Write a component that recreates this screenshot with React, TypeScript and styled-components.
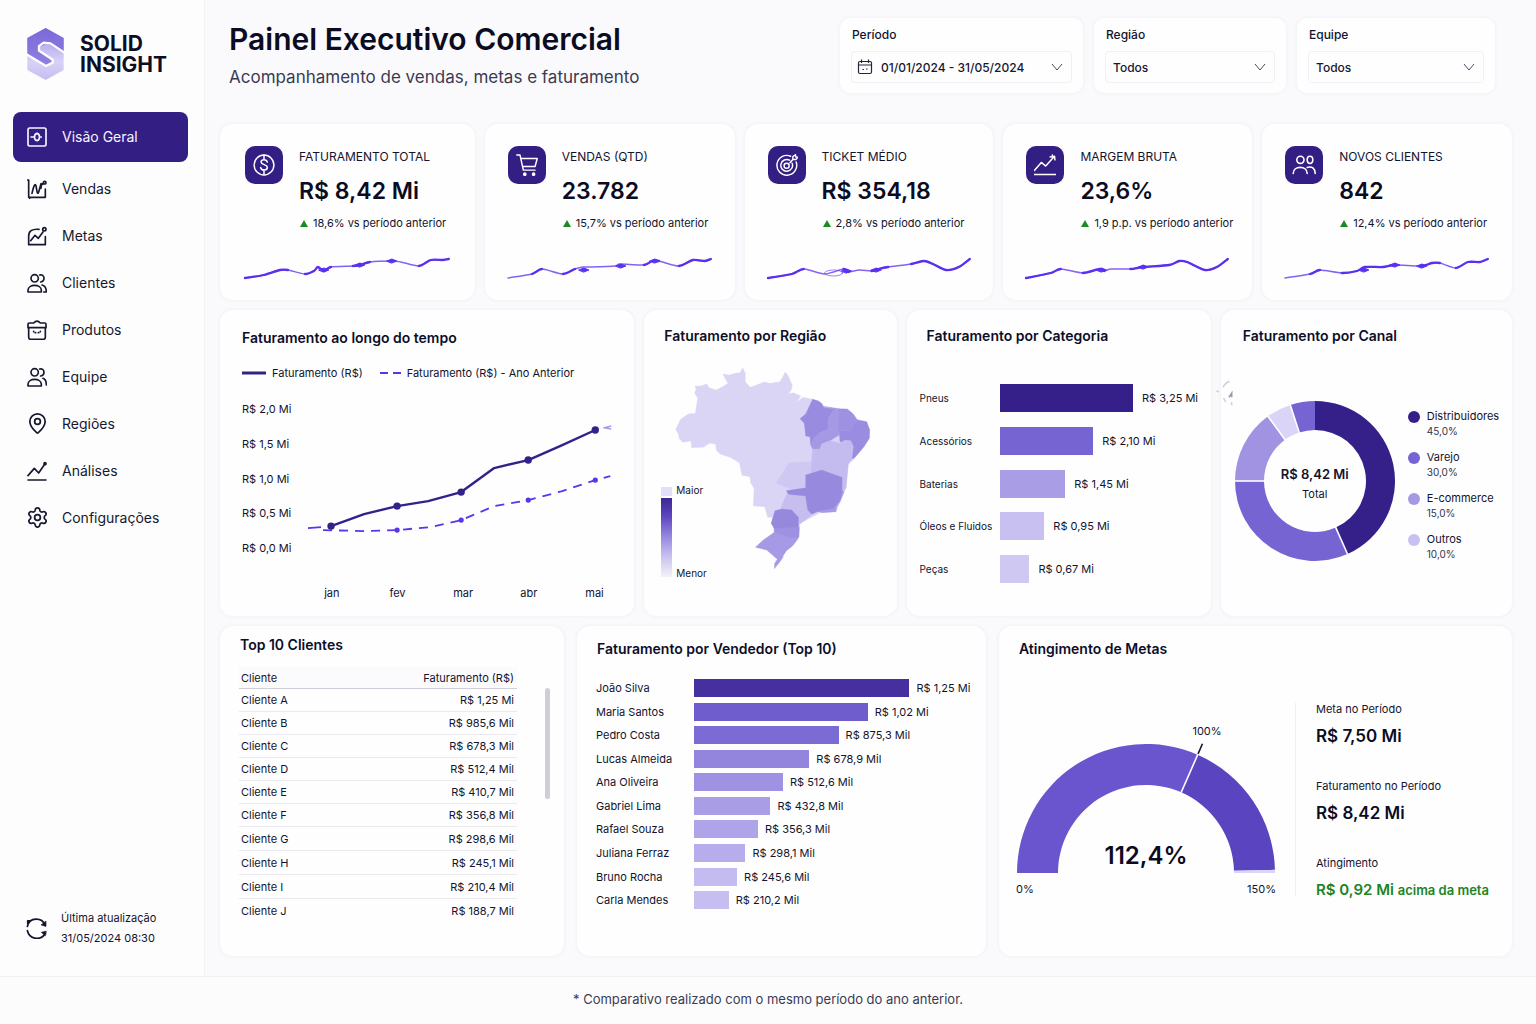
import React from "react";
import styled, { createGlobalStyle } from "styled-components";
import { MapPin, Settings } from "lucide-react";

const GlobalStyle = createGlobalStyle`
  *, *::before, *::after { box-sizing: border-box; }
  body {
    margin: 0;
    background: #fafafd;
    color: #12132d;
    font-family: Inter, "Liberation Sans", sans-serif;
    font-size: 11px;
    line-height: 16px;
  }
  h1, h2, p, ul, dl, dd { margin: 0; padding: 0; }
  ul { list-style: none; }
`;

/* ---------- Shell ---------- */

const Page = styled.div`
  min-height: 100vh;
  display: flex;
  flex-direction: column;
`;

const Body = styled.div`
  flex: 1;
  display: flex;
`;

const Sidebar = styled.aside`
  flex: none;
  width: 205px;
  display: flex;
  flex-direction: column;
  padding: 28px 16px 28px 13px;
  background: #fdfdfe;
  border-right: 1px solid #f3f3f7;
`;

const Brand = styled.div`
  display: flex;
  align-items: center;
  gap: 15px;
  padding-left: 14px;
  margin-bottom: 32px;
`;

const BrandName = styled.span`
  font-size: 21px;
  line-height: 21px;
  font-weight: 700;
  color: #0d0e24;
`;

const NavLink = styled.a<{ $active?: boolean }>`
  display: flex;
  align-items: center;
  gap: 15px;
  height: ${(p) => (p.$active ? 50 : 47)}px;
  margin-bottom: ${(p) => (p.$active ? 3 : 0)}px;
  padding-left: 14px;
  border-radius: 8px;
  font-size: 14px;
  line-height: 20px;
  text-decoration: none;
  color: ${(p) => (p.$active ? "#f6f4ff" : "#16182f")};
  background: ${(p) => (p.$active ? "#331e84" : "transparent")};
`;

const IconSlot = styled.span`
  flex: none;
  width: 20px;
  height: 20px;
  display: flex;
  align-items: center;
  justify-content: center;
  > svg { flex: none; }
`;

const Updated = styled.div`
  margin-top: auto;
  display: flex;
  align-items: center;
  gap: 14px;
  padding-left: 13px;
  line-height: 20px;
`;

const UpdatedTime = styled.time`
  display: block;
`;

const Main = styled.main`
  flex: 1;
  min-width: 0;
  display: flex;
  flex-direction: column;
  gap: 10px;
  padding: 18px 24px 20px 15px;
`;

const Footer = styled.footer`
  padding: 12px 16px 15px;
  border-top: 1px solid #f0f0f4;
  background: #fcfcfd;
  text-align: center;
  font-size: 13px;
  line-height: 20px;
  color: #3a3b52;
`;

/* ---------- Header ---------- */

const Header = styled.header`
  display: flex;
  justify-content: space-between;
  align-items: flex-start;
  padding: 0 17px 0 9px;
  margin-bottom: 21px;
`;

const Title = styled.h1`
  font-size: 30px;
  line-height: 42px;
  font-weight: 600;
  color: #0b0c22;
`;

const Subtitle = styled.p`
  margin-top: 5px;
  font-size: 17px;
  line-height: 24px;
  color: #3a3b52;
`;

const Filters = styled.form`
  display: flex;
  gap: 11px;
`;

const FilterCard = styled.div<{ $width: number }>`
  width: ${(p) => p.$width}px;
  padding: 9px 11px 10px;
  border-radius: 10px;
  background: #fefeff;
  box-shadow: 0 0 4px rgba(40, 36, 90, 0.06);
`;

const FilterLabel = styled.label`
  display: block;
  margin-bottom: 8px;
  padding-left: 1px;
  font-size: 12px;
  line-height: 16px;
  font-weight: 500;
`;

const Field = styled.div`
  display: grid;
  align-items: center;
  > * { grid-area: 1 / 1; }
  > svg { pointer-events: none; }
`;

const Select = styled.select<{ $icon?: boolean }>`
  appearance: none;
  width: 100%;
  height: 32px;
  padding: 2px 28px 0 ${(p) => (p.$icon ? 29 : 7)}px;
  border: 1px solid #f0f0f5;
  border-radius: 4px;
  background: transparent;
  font: inherit;
  font-size: 12px;
  font-weight: 500;
  color: #16182f;
`;

const Chevron = styled.svg`
  width: 12px;
  height: 8px;
  margin-right: 9px;
  justify-self: end;
`;

const Calendar = styled.svg`
  width: 16px;
  height: 16px;
  margin-left: 6px;
`;

/* ---------- Cards ---------- */

const Row = styled.div<{ $cols: string; $gap?: number }>`
  display: grid;
  grid-template-columns: ${(p) => p.$cols};
  gap: ${(p) => p.$gap ?? 10}px;
`;

const Card = styled.section<{ $top?: number }>`
  position: relative;
  min-width: 0;
  padding: ${(p) => p.$top ?? 16}px 0 15px;
  border-radius: 13px;
  background: #fefeff;
  box-shadow: 0 0 4px rgba(40, 36, 90, 0.06);
`;

const CardTitle = styled.h2<{ $inset?: number }>`
  padding-left: ${(p) => p.$inset ?? 20}px;
  font-size: 14px;
  line-height: 20px;
  font-weight: 600;
  color: #0d0e28;
`;

const Kpi = styled(Card)`
  padding: 22px 23px 18px;
  &:first-child { padding: 22px 26px 18px 25px; }
`;

const KpiHead = styled.div`
  display: flex;
  gap: 16px;
  margin-bottom: 24px;
`;

const KpiIcon = styled.span`
  flex: none;
  width: 38px;
  height: 38px;
  display: grid;
  place-items: center;
  border-radius: 10px;
  background: #331e84;
  color: #fff;
`;

const KpiText = styled.div`
  display: grid;
  gap: 8px;
  padding-top: 1px;
  white-space: nowrap;
`;

const KpiLabel = styled.h2`
  font-size: 12px;
  line-height: 20px;
  font-weight: 400;
`;

const KpiValue = styled.p`
  font-size: 23px;
  line-height: 32px;
  font-weight: 600;
  color: #0b0c22;
`;

const Delta = styled.p`
  display: flex;
  align-items: center;
  gap: 5px;
  padding-left: 1px;
  line-height: 16px;
  &::before {
    content: "";
    border: solid transparent;
    border-width: 0 4px 7px;
    border-bottom-color: #1c8a24;
  }
`;

const SparkSvg = styled.svg`
  display: block;
  width: 100%;
  height: 27px;
  overflow: visible;
`;

/* ---------- Line chart ---------- */

const Legend = styled.ul`
  display: flex;
  gap: 17px;
  margin: 17px 0 21px;
  padding-left: 22px;
  li { display: flex; align-items: center; gap: 6px; }
`;

const PlotGrid = styled.div`
  display: grid;
  grid-template-columns: 57px 1fr;
  padding: 0 7px 0 22px;
`;

const YAxis = styled.div`
  display: flex;
  flex-direction: column;
  justify-content: space-between;
  line-height: 14px;
`;

const XAxis = styled.div`
  grid-column: 2;
  display: grid;
  grid-template-columns: repeat(5, 1fr);
  margin-top: 30px;
  text-align: center;
`;

const Fluid = styled.svg`
  display: block;
  width: 100%;
  height: auto;
`;

/* ---------- Map ---------- */

const MapStack = styled.div`
  display: grid;
  height: 214px;
  margin-top: 20px;
  > * { grid-area: 1 / 1; }
`;

const MapSvg = styled.svg`
  width: 200px;
  height: 204px;
  margin-left: 28px;
`;

const MapLegend = styled.div`
  align-self: end;
  display: flex;
  gap: 4px;
  height: 97px;
  margin-left: 17px;
  font-size: 10px;
  line-height: 14px;
`;

const Scale = styled.div`
  display: flex;
  flex-direction: column;
  gap: 2px;
  width: 11px;
  padding: 4px 0 3px;
  &::before { content: ""; height: 9px; background: #e4dff8; }
  &::after {
    content: "";
    flex: 1;
    background: linear-gradient(#3d2794, #5a43bd 22%, #8d7edb 45%, #c9c1f0 74%, #f3f2f7);
  }
`;

const ScaleLabels = styled.div`
  display: flex;
  flex-direction: column;
  justify-content: space-between;
`;

/* ---------- Bar lists ---------- */

const BarList = styled.ul<{ $height: number; $top: number }>`
  display: flex;
  flex-direction: column;
  justify-content: space-between;
  height: ${(p) => p.$height}px;
  margin-top: ${(p) => p.$top}px;
`;

const BarRow = styled.li<{ $label: number; $left: number; $right: number }>`
  display: grid;
  grid-template-columns: ${(p) => p.$label}px 1fr;
  align-items: center;
  padding: 0 ${(p) => p.$right}px 0 ${(p) => p.$left}px;
  white-space: nowrap;
`;

const BarLabel = styled.span<{ $size: number }>`
  font-size: ${(p) => p.$size}px;
`;

const BarTrack = styled.div<{ $gap: number }>`
  display: flex;
  align-items: center;
  gap: ${(p) => p.$gap}px;
`;

const Bar = styled.span<{ $height: number; $color: string }>`
  flex: none;
  height: ${(p) => p.$height}px;
  background: ${(p) => p.$color};
`;

/* ---------- Donut ---------- */

const DonutRow = styled.div`
  display: flex;
  align-items: flex-start;
  gap: 12px;
  margin-top: 54px;
  padding-left: 13px;
`;

const DonutBox = styled.div`
  flex: none;
  width: 162px;
  display: grid;
  align-items: center;
  > * { grid-area: 1 / 1; }
`;

const DonutText = styled.p`
  padding-top: 5px;
  text-align: center;
  line-height: 20px;
  strong { display: block; font-size: 13px; font-weight: 600; }
`;

const ChannelList = styled.ul`
  display: grid;
  gap: 11px;
  margin-top: 9px;
  line-height: 15px;
`;

const Channel = styled.li<{ $color: string }>`
  display: flex;
  gap: 7px;
  &::before {
    content: "";
    width: 12px;
    height: 12px;
    margin-top: 2px;
    border-radius: 50%;
    background: ${(p) => p.$color};
  }
  small { display: block; font-size: 10px; color: #33354c; }
`;

const Specks = styled.svg`
  position: absolute;
  left: -6px;
  top: 70px;
  width: 20px;
  height: 30px;
`;

/* ---------- Table ---------- */

const TableWrap = styled.div`
  display: flex;
  gap: 28px;
  margin-top: 12px;
  padding: 0 14px 18px 19px;
`;

const Table = styled.table`
  flex: 1;
  border-collapse: separate;
  border-spacing: 0;
  line-height: 16px;
  th, td { height: 23px; padding: 0 3px 0 2px; font-weight: 400; text-align: left; border-bottom: 1px solid #e9e9ef; }
  th { height: 22px; background: #fbfbfd; border-color: #cfced9; }
  th:last-child, td:last-child { text-align: right; }
  tr:last-child td { border-bottom: 0; }
  thead tr:last-child th { border-bottom: 1px solid #cfced9; }
  tbody tr:nth-child(n + 7) td { height: 24px; }
`;

const ScrollThumb = styled.div`
  width: 5px;
  height: 111px;
  margin-top: 21px;
  border-radius: 3px;
  background: #cfced8;
`;

/* ---------- Goals ---------- */

const Goals = styled.div`
  display: flex;
  padding-left: 17px;
`;

const GaugeBox = styled.div`
  flex: none;
  width: 260px;
  margin-top: 63px;
`;

const GaugeEnds = styled.div`
  display: flex;
  justify-content: space-between;
  margin-top: 7px;
`;

const Divider = styled.div`
  width: 1px;
  margin: 44px 20px 6px 19px;
  background: #ededf2;
`;

const Stats = styled.dl`
  display: grid;
  gap: 30px;
  margin-top: 42px;
  white-space: nowrap;
  dt { margin-bottom: 7px; }
`;

const StatValue = styled.dd<{ $good?: boolean }>`
  font-size: ${(p) => (p.$good ? 15 : 17)}px;
  line-height: 24px;
  font-weight: 600;
  color: ${(p) => (p.$good ? "#1b8426" : "#0b0c22")};
  small { font-size: 13px; }
`;

/* ---------- Icons ---------- */

const Glyph = ({ children, size = 20, w = 5 }: { children: React.ReactNode; size?: number; w?: number }) => (
  <svg width={size} height={size} viewBox="0 0 60 60" fill="none" stroke="currentColor" strokeWidth={w} strokeLinecap="round" strokeLinejoin="round" aria-hidden="true">
    {children}
  </svg>
);

const Logo = () => (
  <svg width="38" height="52" viewBox="80 84 114 156" aria-hidden="true">
    <defs>
      <linearGradient id="logoTop" x1="0" y1="0" x2="0" y2="1">
        <stop offset="0" stopColor="#7c69d9" />
        <stop offset="1" stopColor="#8f7fe2" />
      </linearGradient>
      <linearGradient id="logoBase" x1="0" y1="0" x2="0" y2="1">
        <stop offset="0.3" stopColor="#b9aeee" />
        <stop offset="0.65" stopColor="#d8d2f6" />
        <stop offset="1" stopColor="#c6bdf1" />
      </linearGradient>
    </defs>
    <path d="M136 84 L190 114 V210 L136 240 L81 210 V114 Z" fill="url(#logoBase)" />
    <path d="M136 84 L190 114 V160 L141 129 L116 142 V152 L157 179 V187 L137 198 L81 165 V114 Z" fill="url(#logoTop)" />
    <path d="M195 160 L150 130 L130 128 L116 138 V152 L157 179 V188 L137 198 L78 163" fill="none" stroke="#fdfdfe" strokeWidth="7" />
  </svg>
);

const people = (
  <>
    <circle cx="23" cy="16" r="11" />
    <path d="M38 6 C53 2 56 24 41 27" />
  </>
);

const navItems: { label: string; icon: React.ReactNode }[] = [
  {
    label: "Visão Geral",
    icon: (
      <Glyph>
        <rect x="3" y="3" width="54" height="54" rx="5" />
        <path d="M30 19 C40 21 40 39 30 41 C20 39 20 21 30 19 Z M12 30 H20 M41 30 H43" />
      </Glyph>
    ),
  },
  {
    label: "Vendas",
    icon: (
      <Glyph>
        <path d="M2 3 H5 V55 H55 V30 M15 43 C22 12 26 12 28 26 S32 50 36 36 L42 14 M42 28 C42 18 46 14 50 14 M8 58 V55" />
        <circle cx="53" cy="11" r="4" />
      </Glyph>
    ),
  },
  {
    label: "Metas",
    icon: (
      <Glyph>
        <path d="M36 10 C14 8 5 16 5 30 V56 H55 V32 M11 44 L24 28 L34 37 L48 18" />
        <circle cx="52" cy="10" r="5" />
      </Glyph>
    ),
  },
  {
    label: "Clientes",
    icon: (
      <Glyph>
        {people}
        <path d="M3 57 V52 C3 32 43 32 43 52 V57 Z M45 36 C55 38 58 44 58 57 H50" />
      </Glyph>
    ),
  },
  {
    label: "Produtos",
    icon: (
      <Glyph>
        <path d="M5 24 V52 Q5 58 11 58 H49 Q55 58 55 52 V24 M3 12 Q3 9 7 9 H20 Q30 -2 40 9 H53 Q57 9 57 12 V23 H3 Z M20 34 V35 M40 34 V35 M25 38 H26 M34 38 H35" />
      </Glyph>
    ),
  },
  {
    label: "Equipe",
    icon: (
      <Glyph>
        {people}
        <path d="M3 57 V52 C3 32 43 32 43 52 V57 Z M48 34 C56 37 58 42 58 54" />
      </Glyph>
    ),
  },
  { label: "Regiões", icon: <MapPin size={23} strokeWidth={1.8} /> },
  {
    label: "Análises",
    icon: (
      <Glyph>
        <path d="M3 57 H57 M3 44 L22 22 L35 36 L53 10" />
        <circle cx="54" cy="8" r="3" />
      </Glyph>
    ),
  },
  { label: "Configurações", icon: <Settings size={23} strokeWidth={1.8} /> },
];

const RefreshIcon = () => (
  <Glyph size={21}>
    <path d="M4 24 C10 -4 46 -2 54 20 M4 36 C10 64 46 64 54 44 M5 8 L12 8 M5 8 V16" />
    <path d="M57 10 V24 L44 20 Z M57 38 L44 41 L55 50 Z" fill="currentColor" strokeWidth="2" />
  </Glyph>
);

const kpiIcons: Record<string, React.ReactNode> = {
  money: (
    <Glyph size={22} w={4}>
      <circle cx="30" cy="30" r="27" />
      <path d="M39 22 C37 13 21 14 22 22 C23 31 39 27 39 37 C39 46 22 46 21 37 M30 3 V14 M30 45 V56" />
    </Glyph>
  ),
  cart: (
    <Glyph size={22} w={4}>
      <path d="M2 3 H11 L20 44 H52 M14 12 H58 L52 34 H19" />
      <circle cx="24" cy="55" r="3" fill="currentColor" />
      <circle cx="48" cy="55" r="3" fill="currentColor" />
    </Glyph>
  ),
  target: (
    <Glyph size={22} w={4}>
      <path d="M40 6 A27 27 0 1 0 55 22 M37 17 A16 16 0 1 0 44 25 M38 24 L46 15 V7 L53 2 L54 8 L60 9 L54 15 H46" />
      <circle cx="29" cy="32" r="7" />
    </Glyph>
  ),
  trend: (
    <Glyph size={22} w={4}>
      <path d="M1 56 H59 M1 45 L20 23 L32 33 L54 8 M44 8 L56 6 L57 16 M50 3 V6" />
    </Glyph>
  ),
  users: (
    <Glyph size={24} w={4}>
      <circle cx="21" cy="17" r="9" />
      <ellipse cx="45" cy="17" rx="7" ry="9" />
      <path d="M3 51 C3 31 38 31 38 51 M38 36 C51 32 58 40 58 51" />
    </Glyph>
  ),
};

const DownMark = () => (
  <Chevron viewBox="0 0 12 8" fill="none" stroke="#4b4c66" aria-hidden="true">
    <path d="M1 1 L6 7 L11 1" />
  </Chevron>
);

/* ---------- Data ---------- */

type Pt = [number, number];

interface KpiData {
  icon: string;
  label: string;
  value: string;
  delta: string;
  points: Pt[];
  bold: [number, number][];
  dots: Pt[];
  loop?: Pt;
}

const kpis: KpiData[] = [
  {
    icon: "money", label: "FATURAMENTO TOTAL", value: "R$ 8,42 Mi", delta: "18,6% vs período anterior",
    points: [[0, 23], [19, 20], [35, 15], [43, 15], [60, 19], [69, 16], [73, 12], [79, 16], [86, 12], [108, 11], [115, 10], [125, 7], [147, 6], [156, 7], [174, 11], [186, 5], [198, 5], [204, 4]],
    bold: [[0, 3], [4, 8], [9, 11], [14, 17]], dots: [[79, 15], [115, 10], [147, 6]],
  },
  {
    icon: "cart", label: "VENDAS (QTD)", value: "23.782", delta: "15,7% vs período anterior",
    points: [[0, 23], [24, 19], [34, 14], [55, 19], [67, 14], [75, 12], [83, 12], [107, 11], [112, 9], [136, 10], [144, 6], [151, 6], [171, 11], [185, 5], [197, 6], [203, 4]],
    bold: [[1, 2], [3, 4], [9, 11], [12, 15]], dots: [[76, 15], [113, 11], [147, 6]],
  },
  {
    icon: "target", label: "TICKET MÉDIO", value: "R$ 354,18", delta: "2,8% vs período anterior",
    points: [[0, 23], [24, 19], [36, 14], [57, 19], [76, 14], [81, 17], [92, 15], [104, 16], [111, 14], [121, 12], [144, 9], [157, 6], [166, 9], [179, 15], [192, 12], [203, 4]],
    bold: [[0, 2], [4, 5], [7, 9], [10, 15]], dots: [[79, 16], [109, 15]], loop: [66, 18],
  },
  {
    icon: "trend", label: "MARGEM BRUTA", value: "23,6%", delta: "1,9 p.p. vs período anterior",
    points: [[0, 23], [25, 18], [35, 14], [57, 18], [74, 14], [79, 16], [85, 14], [105, 14], [118, 12], [144, 10], [154, 6], [162, 7], [180, 15], [192, 12], [203, 4]],
    bold: [[0, 2], [3, 5], [7, 14]], dots: [[76, 15], [118, 12]],
  },
  {
    icon: "users", label: "NOVOS CLIENTES", value: "842", delta: "12,4% vs período anterior",
    points: [[0, 23], [25, 19], [35, 15], [57, 18], [72, 16], [80, 12], [98, 12], [110, 10], [137, 11], [147, 8], [155, 8], [171, 13], [183, 7], [195, 7], [203, 4]],
    bold: [[1, 2], [3, 7], [8, 10], [11, 14]], dots: [[79, 15], [110, 10], [137, 11]],
  },
];

/* Catmull-Rom curve through points a..b, using the neighbours for the tangents */
const smooth = (pts: Pt[], a = 0, b = pts.length - 1) => {
  let d = `M${pts[a][0]} ${pts[a][1]}`;
  for (let i = a; i < b; i++) {
    const p0 = pts[Math.max(i - 1, 0)];
    const p1 = pts[i];
    const p2 = pts[i + 1];
    const p3 = pts[Math.min(i + 2, pts.length - 1)];
    const c = (n: number) => n.toFixed(2);
    d += ` C${c(p1[0] + (p2[0] - p0[0]) / 8)} ${c(p1[1] + (p2[1] - p0[1]) / 8)} ${c(p2[0] - (p3[0] - p1[0]) / 8)} ${c(p2[1] - (p3[1] - p1[1]) / 8)} ${p2[0]} ${p2[1]}`;
  }
  return d;
};

const Spark = ({ data }: { data: KpiData }) => (
  <SparkSvg viewBox="0 0 204 27" preserveAspectRatio="none" fill="none" stroke="#5a2ff0" strokeLinecap="round" aria-hidden="true">
    <path d={smooth(data.points)} strokeWidth="1.5" opacity="0.75" />
    {data.bold.map(([a, b]) => (
      <path key={a} d={smooth(data.points, a, b)} strokeWidth="2.3" />
    ))}
    {data.dots.map(([x, y]) => (
      <path key={x} d={`M${x - 5} ${y} L${x} ${y - 2} L${x + 5} ${y} L${x} ${y + 2} Z`} fill="#5a2ff0" strokeWidth="1" strokeLinejoin="round" />
    ))}
    {data.loop && <ellipse cx={data.loop[0]} cy={data.loop[1]} rx="9" ry="3" strokeWidth="1" opacity="0.6" />}
  </SparkSvg>
);

const current: Pt[] = [[32, 124], [65, 112], [98, 104], [129, 99], [162, 90], [195, 66], [229, 58], [263, 43], [296, 28]];
const previous: Pt[] = [[24, 128], [67, 129], [98, 128], [131, 125], [162, 118], [195, 104], [229, 98], [263, 89], [296, 78], [311, 74]];
const line = (pts: Pt[]) => "M" + pts.map((p) => p.join(" ")).join(" L");

const states: [string, string][] = [
  ["#dad5f5", "M165 228 L183 228 L200 221 L207 233 L228 240 L245 232 L264 220 L257 208 L248 192 L268 195 L285 190 L300 188 L308 173 L316 190 L316 215 L330 232 L350 225 L372 216 L390 220 L420 215 L436 186 L443 195 L457 225 L454 240 L436 266 L446 252 L460 248 L482 258 L470 278 L488 262 L520 268 L552 292 L620 297 L650 328 L680 335 L689 360 L688 385 L640 450 L625 462 L618 535 L588 605 L540 608 L480 640 L475 680 L402 668 L402 650 L393 642 L397 622 L383 622 L374 590 L340 588 L342 535 L332 518 L330 500 L306 496 L298 458 L270 442 L240 432 L229 420 L227 402 L208 400 L190 412 L155 413 L153 393 L128 397 L117 385 L116 374 L107 358 L122 328 L145 312 L166 310 L173 264 L164 250 L168 238 Z"],
  ["#998bdf", "M518 268 L534 272 L545 280 L552 292 L583 297 L566 325 L565 358 L540 368 L522 385 L512 405 L510 380 L497 378 L493 340 L480 326 L497 312 Z"],
  ["#a598e4", "M552 289 L600 297 L597 375 L570 392 L545 402 L540 417 L518 417 L512 405 L522 385 L540 368 L565 358 L566 325 L583 297 Z"],
  ["#9f91e2", "M597 297 L622 297 L640 312 L652 330 L640 345 L632 362 L597 360 Z"],
  ["#9a8ce0", "M652 330 L680 335 L689 360 L688 385 L672 410 L645 442 L635 447 L640 410 L632 392 L600 396 L597 360 L632 362 L640 345 Z"],
  ["#c4bbef", "M518 417 L540 417 L545 402 L570 392 L600 400 L615 390 L632 392 L640 410 L635 447 L625 462 L622 490 L618 535 L606 545 L606 502 L545 480 L512 490 L516 440 Z"],
  ["#cfc8f2", "M448 458 L512 455 L514 490 L497 495 L497 530 L455 538 L408 520 Z"],
  ["#c7beef", "M440 553 L497 558 L503 600 L515 615 L480 642 L470 625 L450 600 L422 597 L432 570 Z"],
  ["#a79ae5", "M606 540 L612 545 L600 575 L590 590 L588 605 L545 608 L525 600 L585 580 Z"],
  ["#9789de", "M497 495 L545 480 L606 502 L606 545 L600 570 L580 595 L540 602 L515 613 L503 600 L497 558 L445 553 L439 542 L497 533 Z"],
  ["#9688dd", "M405 602 L425 597 L455 600 L475 622 L476 655 L402 655 L394 640 Z"],
  ["#9e91e1", "M402 654 L478 652 L477 682 L460 690 L435 680 L404 672 Z"],
  ["#a699e5", "M404 666 L440 680 L475 685 L460 705 L440 725 L420 755 L403 776 L404 760 L412 748 L380 720 L346 712 L370 690 Z"],
];

const categories = [
  { name: "Pneus", value: "R$ 3,25 Mi", pct: 67, color: "#35208a" },
  { name: "Acessórios", value: "R$ 2,10 Mi", pct: 47, color: "#7564d2" },
  { name: "Baterias", value: "R$ 1,45 Mi", pct: 33, color: "#a99de6" },
  { name: "Óleos e Fluidos", value: "R$ 0,95 Mi", pct: 22.5, color: "#c8c0f1" },
  { name: "Peças", value: "R$ 0,67 Mi", pct: 15, color: "#cfc8f3" },
];

const sellers = [
  { name: "João Silva", value: "R$ 1,25 Mi", pct: 77.5, color: "#4630a0" },
  { name: "Maria Santos", value: "R$ 1,02 Mi", pct: 62.5, color: "#6f5ccd" },
  { name: "Pedro Costa", value: "R$ 875,3 Mil", pct: 52, color: "#7c6ad5" },
  { name: "Lucas Almeida", value: "R$ 678,9 Mil", pct: 41.5, color: "#9384dd" },
  { name: "Ana Oliveira", value: "R$ 512,6 Mil", pct: 32, color: "#9f92e2" },
  { name: "Gabriel Lima", value: "R$ 432,8 Mil", pct: 27.5, color: "#a99de6" },
  { name: "Rafael Souza", value: "R$ 356,3 Mil", pct: 23, color: "#afa4e9" },
  { name: "Juliana Ferraz", value: "R$ 298,1 Mil", pct: 18.5, color: "#b8adec" },
  { name: "Bruno Rocha", value: "R$ 245,6 Mil", pct: 15.5, color: "#c4bbf0" },
  { name: "Carla Mendes", value: "R$ 210,2 Mil", pct: 12.5, color: "#c6bdf0" },
];

const clients = [
  ["Cliente A", "R$ 1,25 Mi"], ["Cliente B", "R$ 985,6 Mil"], ["Cliente C", "R$ 678,3 Mil"], ["Cliente D", "R$ 512,4 Mil"],
  ["Cliente E", "R$ 410,7 Mil"], ["Cliente F", "R$ 356,8 Mil"], ["Cliente G", "R$ 298,6 Mil"], ["Cliente H", "R$ 245,1 Mil"],
  ["Cliente I", "R$ 210,4 Mil"], ["Cliente J", "R$ 188,7 Mil"],
];

const channels = [
  { name: "Distribuidores", pct: "45,0%", color: "#35208a" },
  { name: "Varejo", pct: "30,0%", color: "#7664d3" },
  { name: "E-commerce", pct: "15,0%", color: "#a598e4" },
  { name: "Outros", pct: "10,0%", color: "#c8c0f1" },
];

const slices: [number, number, string][] = [
  [0, 156, "#35208a"],
  [156, 270, "#7664d3"],
  [270, 324, "#a193e2"],
  [324, 342, "#dad5f6"],
  [342, 360, "#7664d3"],
];

const polar = (cx: number, cy: number, r: number, deg: number) => {
  const a = (deg * Math.PI) / 180;
  return `${(cx + r * Math.sin(a)).toFixed(2)} ${(cy - r * Math.cos(a)).toFixed(2)}`;
};

const ring = (cx: number, cy: number, R: number, r: number, from: number, to: number) => {
  const large = to - from > 180 ? 1 : 0;
  return `M${polar(cx, cy, R, from)} A${R} ${R} 0 ${large} 1 ${polar(cx, cy, R, to)} L${polar(cx, cy, r, to)} A${r} ${r} 0 ${large} 0 ${polar(cx, cy, r, from)} Z`;
};

/* ---------- Page ---------- */

export default function App() {
  return (
    <>
      <GlobalStyle />
      <Page>
        <Body>
          <Sidebar>
            <Brand>
              <Logo />
              <BrandName>SOLID<br />INSIGHT</BrandName>
            </Brand>
            <nav>
              {navItems.map((item, i) => (
                <NavLink key={item.label} href="#" $active={i === 0}>
                  <IconSlot>{item.icon}</IconSlot>
                  {item.label}
                </NavLink>
              ))}
            </nav>
            <Updated>
              <RefreshIcon />
              <div>
                Última atualização
                <UpdatedTime>31/05/2024 08:30</UpdatedTime>
              </div>
            </Updated>
          </Sidebar>

          <Main>
            <Header>
              <div>
                <Title>Painel Executivo Comercial</Title>
                <Subtitle>Acompanhamento de vendas, metas e faturamento</Subtitle>
              </div>
              <Filters>
                <FilterCard $width={243}>
                  <FilterLabel htmlFor="periodo">Período</FilterLabel>
                  <Field>
                    <Select id="periodo" $icon><option>01/01/2024 - 31/05/2024</option></Select>
                    <Calendar viewBox="0 0 16 16" fill="none" stroke="#24263f" strokeWidth="1.2" aria-hidden="true">
                      <rect x="1.5" y="2.5" width="13" height="12" rx="1.5" />
                      <path d="M1.5 6 H14.5 M4.5 0.5 V4 M11.5 0.5 V4 M5.5 10.5 H7 M9 10 H10.5" />
                    </Calendar>
                    <DownMark />
                  </Field>
                </FilterCard>
                <FilterCard $width={192}>
                  <FilterLabel htmlFor="regiao">Região</FilterLabel>
                  <Field>
                    <Select id="regiao"><option>Todos</option></Select>
                    <DownMark />
                  </Field>
                </FilterCard>
                <FilterCard $width={198}>
                  <FilterLabel htmlFor="equipe">Equipe</FilterLabel>
                  <Field>
                    <Select id="equipe"><option>Todos</option></Select>
                    <DownMark />
                  </Field>
                </FilterCard>
              </Filters>
            </Header>

            <Row $cols="255fr 250fr 249fr 249fr 250fr">
              {kpis.map((k) => (
                <Kpi key={k.label}>
                  <KpiHead>
                    <KpiIcon>{kpiIcons[k.icon]}</KpiIcon>
                    <KpiText>
                      <KpiLabel>{k.label}</KpiLabel>
                      <KpiValue>{k.value}</KpiValue>
                      <Delta>{k.delta}</Delta>
                    </KpiText>
                  </KpiHead>
                  <Spark data={k} />
                </Kpi>
              ))}
            </Row>

            <Row $cols="414fr 252fr 304fr 291fr">
              <Card $top={18}>
                <CardTitle $inset={22}>Faturamento ao longo do tempo</CardTitle>
                <Legend>
                  <li>
                    <svg width="24" height="4" aria-hidden="true"><path d="M0 2 H24" stroke="#35208a" strokeWidth="3" /></svg>
                    Faturamento (R$)
                  </li>
                  <li>
                    <svg width="21" height="4" aria-hidden="true"><path d="M0 2 H21" stroke="#5a35ea" strokeWidth="2" strokeDasharray="8 5" /></svg>
                    Faturamento (R$) - Ano Anterior
                  </li>
                </Legend>
                <PlotGrid>
                  <YAxis>
                    <span>R$ 2,0 Mi</span><span>R$ 1,5 Mi</span><span>R$ 1,0 Mi</span><span>R$ 0,5 Mi</span><span>R$ 0,0 Mi</span>
                  </YAxis>
                  <Fluid viewBox="0 0 328 153" fill="none" role="img" aria-label="Faturamento mensal">
                    <path d="M9 126 L22 125" stroke="#5a35ea" strokeWidth="1.6" />
                    <path d={line(previous)} stroke="#5a35ea" strokeWidth="1.8" strokeDasharray="9 7" />
                    <path d="M304 26 L312 24 M306 26 L312 27" stroke="#a79ae8" strokeWidth="1.4" />
                    <path d={line(current)} stroke="#35208a" strokeWidth="2.4" strokeLinejoin="round" />
                    {[98, 162, 229, 296].map((x) => {
                      const p = previous.find((q) => q[0] === x)!;
                      return <circle key={x} cx={x} cy={p[1]} r="2.6" fill="#5a35ea" />;
                    })}
                    {current.filter((_, i) => i % 2 === 0).map(([x, y]) => (
                      <circle key={x} cx={x} cy={y} r="3.7" fill="#35208a" />
                    ))}
                  </Fluid>
                  <XAxis>
                    <span>jan</span><span>fev</span><span>mar</span><span>abr</span><span>mai</span>
                  </XAxis>
                </PlotGrid>
              </Card>

              <Card>
                <CardTitle>Faturamento por Região</CardTitle>
                <MapStack>
                  <MapSvg viewBox="96 168 600 612" role="img" aria-label="Mapa do Brasil">
                    {states.map(([fill, d]) => <path key={d} d={d} fill={fill} stroke={fill} strokeLinejoin="round" />)}
                    <path d="M427 742 L440 722 L454 712 L448 728 Z" fill="#fefeff" />
                  </MapSvg>
                  <MapLegend>
                    <Scale />
                    <ScaleLabels><span>Maior</span><span>Menor</span></ScaleLabels>
                  </MapLegend>
                </MapStack>
              </Card>

              <Card>
                <CardTitle>Faturamento por Categoria</CardTitle>
                <BarList $height={199} $top={38}>
                  {categories.map((c) => (
                    <BarRow key={c.name} $label={80} $left={13} $right={12}>
                      <BarLabel $size={10}>{c.name}</BarLabel>
                      <BarTrack $gap={9}>
                        <Bar $height={28} $color={c.color} style={{ width: `${c.pct}%` }} />
                        {c.value}
                      </BarTrack>
                    </BarRow>
                  ))}
                </BarList>
              </Card>

              <Card>
                <Specks viewBox="0 0 60 90" fill="none" stroke="#d3d1de" strokeWidth="5" aria-hidden="true">
                  <path d="M4 32 L12 36 M24 22 Q32 6 44 4 M26 54 L32 66 M50 66 V76" />
                  <path d="M42 52 L50 40 V52" stroke="#9b99b5" />
                </Specks>
                <CardTitle $inset={22}>Faturamento por Canal</CardTitle>
                <DonutRow>
                  <DonutBox>
                    <Fluid viewBox="0 0 162 162" role="img" aria-label="Faturamento por canal">
                      {slices.map(([a, b, c]) => (
                        <path key={a} d={ring(81, 81, 80, 51, a, b)} fill={c} />
                      ))}
                      {[156, 270, 324, 342].map((a) => (
                        <path key={a} d={`M${polar(81, 81, 50, a)} L${polar(81, 81, 81, a)}`} stroke="#fefeff" strokeWidth="1.6" />
                      ))}
                    </Fluid>
                    <DonutText><strong>R$ 8,42 Mi</strong>Total</DonutText>
                  </DonutBox>
                  <ChannelList>
                    {channels.map((c) => (
                      <Channel key={c.name} $color={c.color}>
                        <span>{c.name}<small>{c.pct}</small></span>
                      </Channel>
                    ))}
                  </ChannelList>
                </DonutRow>
              </Card>
            </Row>

            <Row $cols="344fr 409fr 513fr" $gap={13}>
              <Card $top={9}>
                <CardTitle>Top 10 Clientes</CardTitle>
                <TableWrap>
                  <Table>
                    <thead><tr><th scope="col">Cliente</th><th scope="col">Faturamento (R$)</th></tr></thead>
                    <tbody>
                      {clients.map(([name, value]) => (
                        <tr key={name}><td>{name}</td><td>{value}</td></tr>
                      ))}
                    </tbody>
                  </Table>
                  <ScrollThumb />
                </TableWrap>
              </Card>

              <Card $top={13}>
                <CardTitle>Faturamento por Vendedor (Top 10)</CardTitle>
                <BarList $height={230} $top={20}>
                  {sellers.map((s) => (
                    <BarRow key={s.name} $label={98} $left={19} $right={14}>
                      <BarLabel $size={11}>{s.name}</BarLabel>
                      <BarTrack $gap={7}>
                        <Bar $height={18} $color={s.color} style={{ width: `${s.pct}%` }} />
                        {s.value}
                      </BarTrack>
                    </BarRow>
                  ))}
                </BarList>
              </Card>

              <Card $top={13}>
                <CardTitle>Atingimento de Metas</CardTitle>
                <Goals>
                  <GaugeBox>
                    <Fluid viewBox="0 0 260 152" role="img" aria-label="Atingimento de 112,4%">
                      <path d={ring(130, 151, 129, 88, -90, 23.6)} fill="#6a55cf" />
                      <path d={ring(130, 151, 129, 88, 23.6, 88.6)} fill="#5a44bf" />
                      <path d={ring(130, 151, 129, 88, 88.6, 90)} fill="#dad5f5" />
                      <path d={`M${polar(130, 151, 87, 23.6)} L${polar(130, 151, 130, 23.6)}`} stroke="#fefeff" strokeWidth="1.6" />
                      <path d={`M${polar(130, 151, 130, 23.6)} L${polar(130, 151, 141, 23.6)}`} stroke="#12132d" strokeWidth="1.6" />
                      <text x="191" y="13" textAnchor="middle" fontSize="11" fill="#12132d">100%</text>
                      <text x="130" y="142" textAnchor="middle" fontSize="24" fontWeight="600" fill="#0b0c22">112,4%</text>
                    </Fluid>
                    <GaugeEnds><span>0%</span><span>150%</span></GaugeEnds>
                  </GaugeBox>
                  <Divider />
                  <Stats>
                    <div><dt>Meta no Período</dt><StatValue>R$ 7,50 Mi</StatValue></div>
                    <div><dt>Faturamento no Período</dt><StatValue>R$ 8,42 Mi</StatValue></div>
                    <div><dt>Atingimento</dt><StatValue $good>R$ 0,92 Mi <small>acima da meta</small></StatValue></div>
                  </Stats>
                </Goals>
              </Card>
            </Row>
          </Main>
        </Body>
        <Footer>* Comparativo realizado com o mesmo período do ano anterior.</Footer>
      </Page>
    </>
  );
}
